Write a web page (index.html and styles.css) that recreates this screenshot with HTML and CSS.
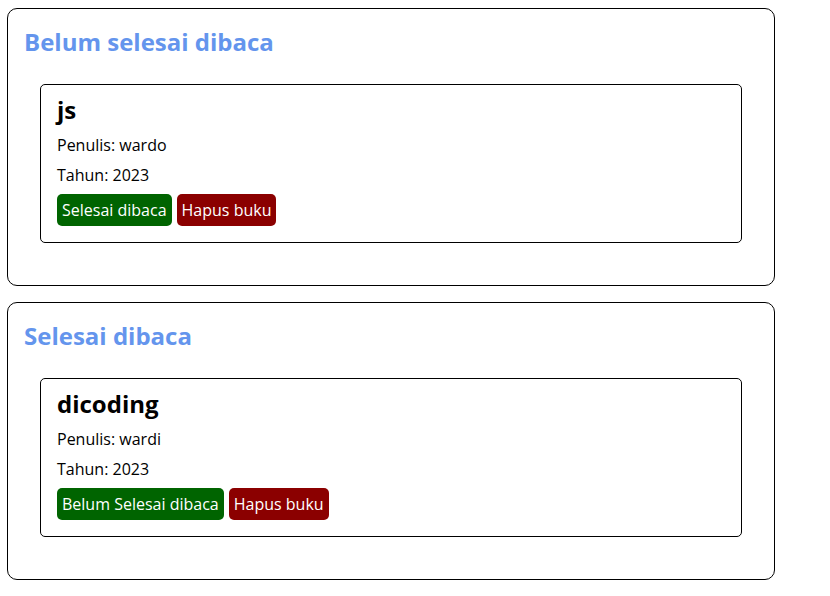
FILE: index.html
```html
<!DOCTYPE html>
<html lang="id">
<head>
<meta charset="utf-8">
<title>Bookshelf</title>
<link rel="stylesheet" href="styles.css">
</head>
<body>
<main class="main">
  <section class="book-shelf">
    <h2 class="shelf-title">Belum selesai dibaca</h2>
    <div class="book-list">
      <article class="book-item">
        <h3 class="book-title">js</h3>
        <p class="book-meta">Penulis: wardo</p>
        <p class="book-meta">Tahun: 2023</p>
        <div class="action">
          <button class="btn green">Selesai dibaca</button><button class="btn red">Hapus buku</button>
        </div>
      </article>
    </div>
  </section>
  <section class="book-shelf">
    <h2 class="shelf-title">Selesai dibaca</h2>
    <div class="book-list">
      <article class="book-item">
        <h3 class="book-title">dicoding</h3>
        <p class="book-meta">Penulis: wardi</p>
        <p class="book-meta">Tahun: 2023</p>
        <div class="action">
          <button class="btn green">Belum Selesai dibaca</button><button class="btn red">Hapus buku</button>
        </div>
      </article>
    </div>
  </section>
</main>
</body>
</html>
```

FILE: styles.css
```css
* {
  margin: 0;
  padding: 0;
  box-sizing: border-box;
  font-family: "Open Sans", sans-serif;
}

body {
  background: #ffffff;
  color: #000000;
}

.main {
  width: 775px;
  padding: 8px 0 0 7px;
}

.book-shelf {
  border: 1px solid #000000;
  border-radius: 10px;
  padding: 16px;
  margin-bottom: 16px;
}

.shelf-title {
  color: cornflowerblue;
  font-size: 24px;
  font-weight: 700;
}

.book-list {
  padding: 16px;
}

.book-item {
  border: 1px solid #000000;
  border-radius: 5px;
  padding: 8px 16px 16px 16px;
  margin: 10px 0;
}

.book-title {
  font-size: 24px;
  font-weight: 700;
  margin: 0;
}

.book-meta {
  font-size: 16px;
  margin: 8px 0;
}

.action {
  display: flex;
}

.btn {
  border: 0;
  padding: 5px;
  margin: 0 5px 0 0;
  border-radius: 5px;
  font-size: 16px;
  color: #ffffff;
}

.green {
  background-color: darkgreen;
}

.red {
  background-color: darkred;
}
```
